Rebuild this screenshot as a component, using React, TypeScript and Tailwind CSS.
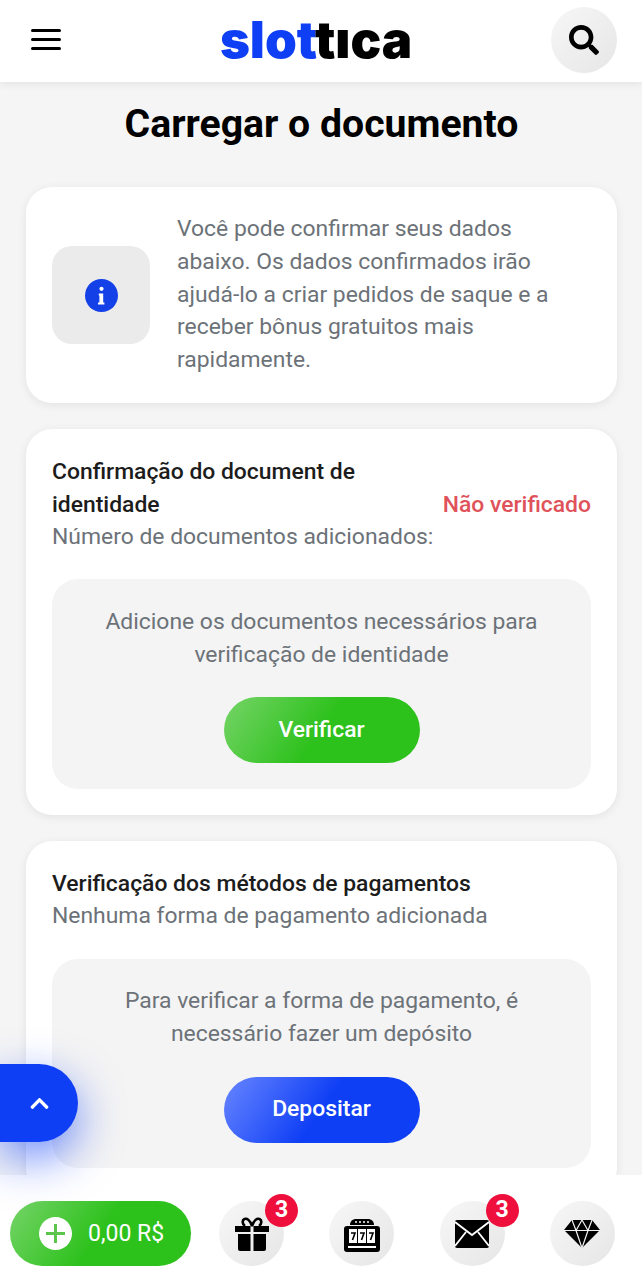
import { FaChevronUp, FaSearch } from "react-icons/fa";
import type { ReactNode } from "react";

const InfoIcon = () => (
  <svg width="33" height="33" viewBox="0 0 33 33">
    <circle cx="16.5" cy="16.5" r="16.5" fill="#1440e8" />
    <circle cx="16.5" cy="9.8" r="2.1" fill="#fff" />
    <path d="M13.8 14.5h4.4v9h1.2V25.5h-6.4v-2h1.4v-7h-.6z" fill="#fff" />
  </svg>
);

const GiftIcon = () => (
  <svg width="34" height="34" viewBox="0 0 34 34">
    <path d="M17 9c-2-6-5-8-7.5-7S7 7 10 9M17 9c2-6 5-8 7.5-7S27 7 24 9" fill="none" stroke="#000" strokeWidth="2.6" />
    <path d="M0 9h15.5v6H0zM18.5 9H34v6H18.5z" fill="#000" />
    <path d="M3 17h12.5v17H5a2 2 0 0 1-2-2zM18.5 17H31v15a2 2 0 0 1-2 2H18.5z" fill="#000" />
  </svg>
);

const SlotIcon = () => (
  <svg width="36" height="36" viewBox="0 0 36 36">
    <path d="M6 9c0-4 3-6 6-6h12c3 0 6 2 6 6z" fill="#000" />
    <rect x="0" y="10" width="36" height="26" rx="3" fill="#000" />
    <g fill="#fff">
      <circle cx="12" cy="6" r="1" />
      <circle cx="16" cy="6" r="1" />
      <circle cx="20" cy="6" r="1" />
      <circle cx="24" cy="6" r="1" />
      <rect x="4" y="30" width="28" height="2" />
      <rect x="5" y="13" width="8" height="14" />
      <rect x="14" y="13" width="8" height="14" />
      <rect x="23" y="13" width="8" height="14" />
    </g>
    <g fill="none" stroke="#000" strokeWidth="1.6">
      <path d="M7 17h4l-2.5 7" />
      <path d="M16 17h4l-2.5 7" />
      <path d="M25 17h4l-2.5 7" />
    </g>
  </svg>
);

const MailIcon = () => (
  <svg width="34" height="28" viewBox="0 0 34 28">
    <rect width="34" height="28" rx="2" fill="#000" />
    <path d="M0 2l17 13L34 2M0 26l11-14M34 26L23 12" fill="none" stroke="#fff" strokeWidth="1.8" />
  </svg>
);

const GemIcon = () => (
  <svg width="36" height="28" viewBox="0 0 36 28">
    <path d="M8 0h20l8 10-18 18L0 10z" fill="#000" />
    <path d="M0 10.5h36M8 0l4 10.5L18 28M28 0l-4 10.5L18 28M18 0l-6 10.5M18 0l6 10.5" fill="none" stroke="#f2f2f2" strokeWidth="1.2" />
  </svg>
);

const RoundButton = ({ children, badge }: { children: ReactNode; badge?: boolean }) => (
  <div className="relative w-[65px] h-[65px] rounded-full bg-gradient-to-br from-[#f7f7f7] to-[#e6e6e6] flex items-center justify-center">
    {children}
    {badge && (
      <span className="absolute left-[46px] top-[-7px] w-[33px] h-[33px] rounded-full bg-[#ee0f3c] text-white text-[23px] font-bold flex items-center justify-center">
        3
      </span>
    )}
  </div>
);

const ActionButton = ({ label, tone }: { label: string; tone: "green" | "blue" }) => (
  <button
    className={`w-[196px] h-[66px] rounded-full text-white text-[22.9px] font-medium flex items-center justify-center ${
      tone === "green"
        ? "bg-[linear-gradient(125deg,#76d468_0%,#2dc11c_50%)]"
        : "bg-[linear-gradient(125deg,#6886ff_0%,#0f3ff5_50%)]"
    }`}
  >
    {label}
  </button>
);

export default function App() {
  return (
    <div className="relative w-[642px] h-[1280px] overflow-hidden bg-[#f5f5f5] flex flex-col font-['Roboto',sans-serif]">
      <header className="h-[82px] shrink-0 bg-white shadow-[0_2px_8px_rgba(0,0,0,0.08)] z-10 flex items-center justify-between pl-[31px] pr-[25px]">
        <div className="flex flex-col gap-[6px] w-[30px] mb-[3px]">
          <span className="h-[3px] bg-black rounded-full" />
          <span className="h-[3px] bg-black rounded-full" />
          <span className="h-[3px] bg-black rounded-full" />
        </div>
        <div className="ml-[20px] font-['Inter',sans-serif] font-black text-[51px] leading-none mb-[3px]">
          <span className="text-[#0f3ff5]">slot</span>
          <span className="text-black">tıca</span>
        </div>
        <div className="w-[66px] h-[66px] mb-[2px] rounded-full bg-gradient-to-br from-[#f7f7f7] to-[#e6e6e6] flex items-center justify-center">
          <FaSearch className="text-[30px] text-black" />
        </div>
      </header>

      <main className="flex-1 min-h-0 overflow-hidden pl-[26px] pr-[25px]">
        <h1 className="text-[39.2px] leading-[44px] font-bold text-black text-center mt-[20px] mb-[41px]">
          Carregar o documento
        </h1>

        <section className="h-[216px] bg-white rounded-[26px] shadow-[0_2px_10px_rgba(0,0,0,0.08)] flex items-center pl-[26px] gap-[27px]">
          <div className="w-[98px] h-[98px] shrink-0 rounded-[20px] bg-[#ebebeb] flex items-center justify-center">
            <InfoIcon />
          </div>
          <p className="w-[385px] text-[22.9px] leading-[32.8px] text-[#6c7278]">
            Você pode confirmar seus dados abaixo. Os dados confirmados irão ajudá-lo a criar pedidos de saque e a receber bônus gratuitos mais rapidamente.
          </p>
        </section>

        <section className="mt-[26px] bg-white rounded-[26px] shadow-[0_2px_10px_rgba(0,0,0,0.08)] px-[26px] pt-[27px] pb-[26px]">
          <div className="flex items-end justify-between">
            <div className="w-[340px] text-[22.9px] leading-[32.8px] font-medium text-[#1c1c1c]">
              Confirmação do document de identidade
            </div>
            <div className="text-[22.9px] leading-[32.8px] font-medium text-[#e0525a]">Não verificado</div>
          </div>
          <div className="-mt-[1px] text-[22.9px] leading-[32.8px] text-[#6c7278]">Número de documentos adicionados:</div>
          <div className="mt-[26px] h-[210px] bg-[#f4f4f4] rounded-[26px] pt-[27px] flex flex-col items-center">
            <p className="w-[470px] text-[22.9px] leading-[32.8px] text-[#6c7278] text-center">
              Adicione os documentos necessários para verificação de identidade
            </p>
            <div className="mt-[25px]">
              <ActionButton label="Verificar" tone="green" />
            </div>
          </div>
        </section>

        <section className="mt-[26px] bg-white rounded-[26px] shadow-[0_2px_10px_rgba(0,0,0,0.08)] px-[26px] pt-[27px] pb-[26px]">
          <div className="text-[22.9px] leading-[32.8px] font-medium text-[#1c1c1c]">Verificação dos métodos de pagamentos</div>
          <div className="-mt-[1px] text-[22.9px] leading-[32.8px] text-[#6c7278]">Nenhuma forma de pagamento adicionada</div>
          <div className="mt-[26px] h-[209px] bg-[#f4f4f4] rounded-[26px] pt-[26px] flex flex-col items-center">
            <p className="w-[430px] text-[22.9px] leading-[32.8px] text-[#6c7278] text-center">
              Para verificar a forma de pagamento, é necessário fazer um depósito
            </p>
            <div className="mt-[26px]">
              <ActionButton label="Depositar" tone="blue" />
            </div>
          </div>
        </section>
      </main>

      <div className="absolute left-0 top-[1064px] w-[78px] h-[78px] rounded-r-[39px] bg-[#0f3ff5] shadow-[0_16px_45px_rgba(15,63,245,0.6)] z-20 flex items-center justify-center">
        <FaChevronUp className="text-[21px] text-white" />
      </div>

      <nav className="h-[105px] shrink-0 bg-white z-10 relative flex items-start pt-[26px] pl-[10px] pr-[27px]">
        <div className="w-[181px] h-[65px] rounded-full bg-[linear-gradient(125deg,#76d468_0%,#2dc11c_50%)] flex items-center pl-[29px] gap-[16px] text-white">
          <span className="w-[33px] h-[33px] rounded-full bg-white flex items-center justify-center">
            <svg width="19" height="19" viewBox="0 0 19 19">
              <path d="M8 0h3v8h8v3h-8v8H8v-8H0V8h8z" fill="#5cc54c" />
            </svg>
          </span>
          <span className="text-[23px] mt-[2px]">0,00 R$</span>
        </div>
        <div className="flex-1 flex justify-between pl-[28px]">
          <RoundButton badge>
            <GiftIcon />
          </RoundButton>
          <RoundButton>
            <SlotIcon />
          </RoundButton>
          <RoundButton badge>
            <MailIcon />
          </RoundButton>
          <RoundButton>
            <GemIcon />
          </RoundButton>
        </div>
      </nav>
    </div>
  );
}
